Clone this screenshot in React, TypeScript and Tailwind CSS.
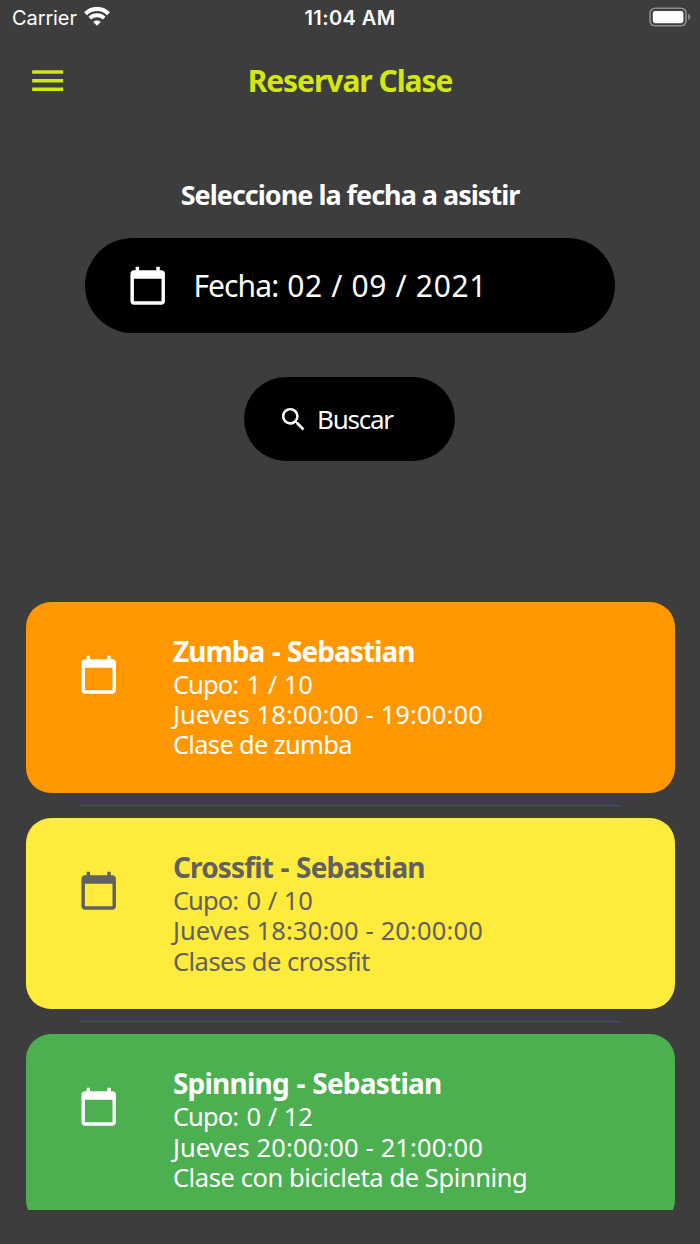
import { MdCalendarToday, MdMenu, MdSearch } from 'react-icons/md';
import clsx from 'clsx';

interface GymClass {
  title: string;
  titleTracking: string;
  capacity: string;
  schedule: string;
  description: string;
  descriptionTracking: string;
  color: string;
}

const CLASSES: GymClass[] = [
  {
    title: 'Zumba - Sebastian',
    titleTracking: 'tracking-[-0.95px]',
    capacity: '1 / 10',
    schedule: 'Jueves 18:00:00 - 19:00:00',
    description: 'Clase de zumba',
    descriptionTracking: 'tracking-[-0.68px]',
    color: 'bg-[#ff9800] text-white',
  },
  {
    title: 'Crossfit - Sebastian',
    titleTracking: 'tracking-[-0.84px]',
    capacity: '0 / 10',
    schedule: 'Jueves 18:30:00 - 20:00:00',
    description: 'Clases de crossfit',
    descriptionTracking: 'tracking-[-0.5px]',
    color: 'bg-[#ffeb3b] text-[#616161]',
  },
  {
    title: 'Spinning - Sebastian',
    titleTracking: 'tracking-[-0.76px]',
    capacity: '0 / 12',
    schedule: 'Jueves 20:00:00 - 21:00:00',
    description: 'Clase con bicicleta de Spinning',
    descriptionTracking: 'tracking-[-0.41px]',
    color: 'bg-[#4caf50] text-white',
  },
];

function StatusBar() {
  return (
    <div className="grid h-9 grid-cols-3 items-center pr-[9px] pl-3 font-['Inter',sans-serif] text-[20px] leading-9">
      <div className="flex items-center gap-[7px]">
        <span className="tracking-[-0.1px]">Carrier</span>
        <svg viewBox="0 0 26 19" className="mb-[3px] h-[19px] w-[26px]" fill="none" stroke="currentColor">
          <path d="M1.6 6.7A16.2 16.2 0 0 1 24.4 6.7" strokeWidth="4.2" />
          <path d="M5.8 11.2A10.3 10.3 0 0 1 20.2 11.2" strokeWidth="3.8" />
          <path d="M13 18.8L9.2 15A5.6 5.6 0 0 1 16.8 15Z" fill="currentColor" stroke="none" />
        </svg>
      </div>
      <span className="-ml-[3px] text-center font-semibold tracking-[0.4px]">11:04 AM</span>
      <svg viewBox="0 0 42 20" className="mb-0.5 h-5 w-[42px] justify-self-end">
        <rect x="1" y="1.2" width="36" height="17.6" rx="5" fill="none" stroke="#8d8d8d" strokeWidth="1.6" />
        <rect x="3.8" y="4" width="30.6" height="12.2" rx="2.4" fill="#fff" />
        <path d="M39.2 6.8Q41.4 8 41.4 10T39.2 13.2Z" fill="#8d8d8d" />
      </svg>
    </div>
  );
}

function ClassCard({ item }: { item: GymClass }) {
  return (
    <article className={clsx('mx-[25.5px] flex h-[191px] rounded-[25px] pt-8 pl-[52px]', item.color)}>
      <MdCalendarToday className="mt-5 size-[41.4px] shrink-0" />
      <div className="ml-[54px] text-[25.5px] leading-[30.4px] whitespace-nowrap">
        <h2 className={clsx('h-[35px] text-[28px] leading-[34px] font-bold [word-spacing:1px]', item.titleTracking)}>
          {item.title}
        </h2>
        <p>
          <span className="mr-[2.5px] tracking-[-0.9px]">Cupo: </span>
          {item.capacity}
        </p>
        <p className="tracking-[0.13px]">{item.schedule}</p>
        <p className={item.descriptionTracking}>{item.description}</p>
      </div>
    </article>
  );
}

export default function App() {
  return (
    <div className="flex h-[1244px] w-[700px] flex-col overflow-hidden bg-[#3d3d3d] font-['Noto_Sans',sans-serif] text-white">
      <StatusBar />

      {/* App bar */}
      <header className="grid h-[90px] grid-cols-[1fr_auto_1fr] items-center px-[26.5px] text-[#d4e80d]">
        <MdMenu className="size-[41.4px]" />
        <h1 className="text-[30px] leading-9 font-bold tracking-[-1.05px]">Reservar Clase</h1>
      </header>

      {/* Date search */}
      <section className="flex h-[475.5px] shrink-0 flex-col items-center pt-[51px]">
        <p className="text-[27px] leading-9 font-bold tracking-[-1px]">Seleccione la fecha a asistir</p>
        <button className="mt-[25px] flex h-[95px] w-[530px] items-center rounded-full bg-black pl-[41.5px]">
          <MdCalendarToday className="size-[41.4px]" />
          <span className="ml-[25.5px] text-[30px] tracking-[0.65px]">
            <span className="mr-0.5 tracking-[-0.9px]">Fecha: </span>
            02 / 09 / 2021
          </span>
        </button>
        <button className="mt-11 mr-px flex h-[84px] w-[211px] items-center rounded-full bg-black pl-[33.5px]">
          <MdSearch className="size-[31px]" />
          <span className="ml-[8.5px] text-[26px] tracking-[-1.25px]">Buscar</span>
        </button>
      </section>

      {/* Class list, clipped at the safe area */}
      <main className="h-[608.5px] shrink-0 overflow-hidden">
        {CLASSES.map((item, i) => (
          <div key={item.title}>
            {i > 0 && (
              <div className="flex h-[25.4px] items-center px-20">
                <div className="h-px w-full bg-[#3f4c94]" />
              </div>
            )}
            <ClassCard item={item} />
          </div>
        ))}
      </main>
    </div>
  );
}
